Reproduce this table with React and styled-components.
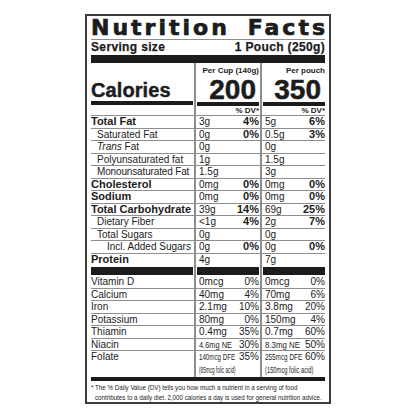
import React from "react";
import styled, { createGlobalStyle } from "styled-components";

const ink = "#1c1c1c";
const rule = "#8e8e8e";

const GlobalStyle = createGlobalStyle`
  * { box-sizing: border-box; }
  html, body { margin: 0; padding: 0; background: #fff; }
  body { font-family: "Liberation Sans", Arial, sans-serif; color: ${ink}; }
`;

const Page = styled.div`
  width: 416px;
  height: 416px;
  padding-top: 14px;
  display: flex;
  justify-content: center;
  align-items: flex-start;
`;

const LabelBox = styled.div`
  width: 246px;
  height: 390px;
  border: 2px solid #3b3b3b;
  padding: 0 4px;
  display: flex;
  flex-direction: column;
`;

const Title = styled.h1`
  margin: 0;
  flex: none;
  height: 24px;
  line-height: 23px;
  display: flex;
  justify-content: space-between;
  font-family: "DejaVu Sans", sans-serif;
  font-size: 22px;
  font-weight: 700;
  letter-spacing: 3px;
  -webkit-text-stroke: 0.7px ${ink};
  border-bottom: 1px solid ${rule};
  span:last-child { margin-right: -3px; }
`;

const Serving = styled.div`
  flex: none;
  height: 15px;
  line-height: 14px;
  display: flex;
  justify-content: space-between;
  font-size: 12px;
  font-weight: 700;
  letter-spacing: 0.35px;
  -webkit-text-stroke: 0.25px ${ink};
`;

const Bar = styled.div`
  flex: none;
  align-self: stretch;
  height: ${p => p.$h}px;
  background: ${ink};
  margin: ${p => p.$m || "0"};
`;

const Row = styled.div`
  flex: none;
  display: grid;
  grid-template-columns: 103px 66px 65px;
`;

const Name = styled.div`
  height: ${p => p.$h || 12.5}px;
  line-height: 11.5px;
  padding-left: ${p => p.$indent || 0}px;
  font-size: ${p => (p.$bold ? 11 : 10)}px;
  font-weight: ${p => (p.$bold ? 700 : 400)};
  letter-spacing: ${p => p.$tight ? "-0.15px" : "0"};
  border-bottom: ${p => (p.$open ? "none" : `1px solid ${rule}`)};
  white-space: nowrap;
`;

const Amount = styled.div`
  height: ${p => p.$h || 12.5}px;
  border-left: 2px solid ${rule};
  border-bottom: ${p => (p.$open ? "none" : `1px solid ${rule}`)};
  padding: 0 ${p => (p.$last ? 0 : 1)}px 0 3px;
  display: flex;
  flex-direction: column;
  line-height: 11.5px;
  font-size: 10px;
  white-space: nowrap;
`;

const AmountLine = styled.div`
  display: flex;
  justify-content: space-between;
  align-items: baseline;
  height: ${p => p.$h || "auto"};
`;

const Pct = styled.span`
  font-weight: ${p => (p.$bold ? 700 : 400)};
  font-size: ${p => (p.$bold ? 11 : 10)}px;
`;

const Narrow = styled.span`
  display: inline-block;
  flex: none;
  width: ${p => p.$w}px;
  font-size: ${p => p.$size}px;
  transform: scaleX(${p => p.$sx});
  transform-origin: left center;
  white-space: nowrap;
`;

const CalName = styled.div`
  height: 42px;
  display: flex;
  flex-direction: column;
  justify-content: flex-end;
`;

const CalWord = styled.div`
  font-size: 20px;
  font-weight: 700;
  line-height: 20px;
  margin-bottom: 1px;
  letter-spacing: 0.1px;
  -webkit-text-stroke: 0.4px ${ink};
`;

const CalCol = styled.div`
  height: 42px;
  border-left: 2px solid ${rule};
  padding-top: 3px;
  display: flex;
  flex-direction: column;
  align-items: flex-end;
`;

const PerLabel = styled.div`
  font-size: 8px;
  font-weight: 700;
  line-height: 9px;
  padding-right: ${p => (p.$last ? 0 : 1)}px;
`;

const BigNum = styled.div`
  font-size: 28px;
  font-weight: 700;
  line-height: 24px;
  margin-top: 3px;
  padding-right: 4px;
  -webkit-text-stroke: 0.5px ${ink};
  margin-bottom: auto;
`;

const DvHead = styled.div`
  height: 11px;
  border-left: ${p => (p.$blank ? "none" : `2px solid ${rule}`)};
  border-bottom: 1px solid ${rule};
  text-align: right;
  font-size: 8px;
  font-weight: 700;
  line-height: 11px;
  padding-right: ${p => (p.$last ? 0 : 1)}px;
`;

const BarCell = styled.div`
  height: 10px;
  padding: 1px 0;
  display: flex;
  flex-direction: column;
  border-left: ${p => (p.$first ? "none" : `2px solid ${rule}`)};
`;

const Footnote = styled.p`
  margin: 0;
  padding-top: 2px;
  font-size: 8px;
  line-height: 9.5px;
  white-space: nowrap;
  width: 300px;
  transform: scaleX(0.78);
  transform-origin: left top;
`;

const Indent = styled.span`
  padding-left: 5px;
`;

const upper = [
  { name: "Total Fat", bold: true, a: ["3g", "4%"], b: ["5g", "6%"] },
  { name: "Saturated Fat", indent: 6, a: ["0g", "0%"], b: ["0.5g", "3%"] },
  { name: <><i>Trans</i> Fat</>, indent: 6, a: ["0g"], b: ["0g"] },
  { name: "Polyunsaturated fat", indent: 6, a: ["1g"], b: ["1.5g"] },
  { name: "Monounsaturated Fat", indent: 6, tight: true, a: ["1.5g"], b: ["3g"] },
  { name: "Cholesterol", bold: true, a: ["0mg", "0%"], b: ["0mg", "0%"] },
  { name: "Sodium", bold: true, a: ["0mg", "0%"], b: ["0mg", "0%"] },
  { name: "Total Carbohydrate", bold: true, a: ["39g", "14%"], b: ["69g", "25%"] },
  { name: "Dietary Fiber", indent: 6, a: ["<1g", "4%"], b: ["2g", "7%"] },
  { name: "Total Sugars", indent: 6, a: ["0g"], b: ["0g"] },
  { name: "Incl. Added Sugars", indent: 16, a: ["0g", "0%"], b: ["0g", "0%"] },
  { name: "Protein", bold: true, a: ["4g"], b: ["7g"], open: true },
];

const lower = [
  { name: "Vitamin D", a: ["0mcg", "0%"], b: ["0mcg", "0%"] },
  { name: "Calcium", a: ["40mg", "4%"], b: ["70mg", "6%"] },
  { name: "Iron", a: ["2.1mg", "10%"], b: ["3.8mg", "20%"] },
  { name: "Potassium", a: ["80mg", "0%"], b: ["150mg", "4%"] },
  { name: "Thiamin", a: ["0.4mg", "35%"], b: ["0.7mg", "60%"] },
];

function AmountCell({ v, bold, last, open }) {
  return (
    <Amount $last={last} $open={open}>
      <AmountLine>
        <span>{v[0]}</span>
        {v[1] && <Pct $bold={bold}>{v[1]}</Pct>}
      </AmountLine>
    </Amount>
  );
}

function NutrientRow({ item, pctBold }) {
  return (
    <Row>
      <Name $bold={item.bold} $indent={item.indent} $open={item.open} $tight={item.tight}>
        {item.name}
      </Name>
      <AmountCell v={item.a} bold={pctBold} open={item.open} />
      <AmountCell v={item.b} bold={pctBold} open={item.open} last />
    </Row>
  );
}

export default function App() {
  return (
    <>
      <GlobalStyle />
      <Page>
        <LabelBox>
          <Title><span>Nutrition</span><span>Facts</span></Title>
          <Serving><span>Serving size</span><span>1 Pouch (250g)</span></Serving>
          <Bar $h={8} />

          <Row>
            <CalName>
              <CalWord>Calories</CalWord>
              <Bar $h={4} $m="0 1px 0 0" />
            </CalName>
            <CalCol>
              <PerLabel>Per Cup (140g)</PerLabel>
              <BigNum>200</BigNum>
              <Bar $h={4} $m="0 1px" />
            </CalCol>
            <CalCol>
              <PerLabel $last>Per pouch</PerLabel>
              <BigNum>350</BigNum>
              <Bar $h={4} $m="0 0 0 1px" />
            </CalCol>
          </Row>

          <Row>
            <DvHead $blank />
            <DvHead>% DV*</DvHead>
            <DvHead $last>% DV*</DvHead>
          </Row>

          {upper.map((item, i) => (
            <NutrientRow key={i} item={item} pctBold />
          ))}

          <Row>
            <BarCell $first><Bar $h={8} $m="0 1px 0 0" /></BarCell>
            <BarCell><Bar $h={8} $m="0 1px" /></BarCell>
            <BarCell><Bar $h={8} $m="0 0 0 1px" /></BarCell>
          </Row>

          {lower.map((item, i) => (
            <NutrientRow key={i} item={item} />
          ))}

          <Row>
            <Name>Niacin</Name>
            <Amount>
              <AmountLine>
                <Narrow $w={33} $size={9.5} $sx={0.78}>4.6mg NE</Narrow>
                <Pct>30%</Pct>
              </AmountLine>
            </Amount>
            <Amount $last>
              <AmountLine>
                <Narrow $w={35} $size={9.5} $sx={0.83}>8.3mg NE</Narrow>
                <Pct>50%</Pct>
              </AmountLine>
            </Amount>
          </Row>

          <Row>
            <Name $h={26} $open>Folate</Name>
            <Amount $h={26} $open>
              <AmountLine $h="14px">
                <Narrow $w={36} $size={9.5} $sx={0.65}>140mcg DFE</Narrow>
                <Pct>35%</Pct>
              </AmountLine>
              <AmountLine>
                <Narrow $w={39} $size={8.5} $sx={0.55}>(85mcg folic acid)</Narrow>
              </AmountLine>
            </Amount>
            <Amount $h={26} $open $last>
              <AmountLine $h="14px">
                <Narrow $w={37} $size={9.5} $sx={0.67}>255mcg DFE</Narrow>
                <Pct>60%</Pct>
              </AmountLine>
              <AmountLine>
                <Narrow $w={52} $size={8.5} $sx={0.68}>(150mcg folic acid)</Narrow>
              </AmountLine>
            </Amount>
          </Row>

          <Bar $h={4} />

          <Footnote>
            * The % Daily Value (DV) tells you how much a nutrient in a serving of food
            <br />
            <Indent>contributes to a daily diet. 2,000 calories a day is used for general nutrition advice.</Indent>
          </Footnote>
        </LabelBox>
      </Page>
    </>
  );
}
